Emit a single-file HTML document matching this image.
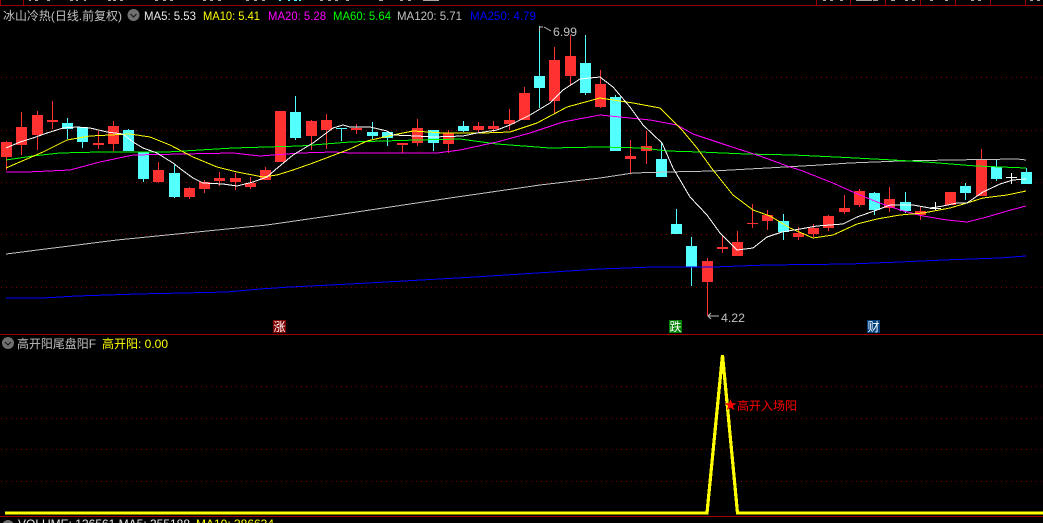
<!DOCTYPE html>
<html><head><meta charset="utf-8"><style>
html,body{margin:0;padding:0;background:#000;width:1043px;height:523px;overflow:hidden}
svg{display:block;position:absolute;left:0;top:0}
text{font-family:"Liberation Sans","WenQuanYi Zen Hei","Noto Sans CJK SC",sans-serif;font-size:12px}
</style></head><body>
<svg width="1043" height="523" viewBox="0 0 1043 523" xmlns="http://www.w3.org/2000/svg">
<rect width="1043" height="523" fill="#000"/>
<!-- top strip -->
<g fill="#a8a8a8" shape-rendering="crispEdges">
<path d="M29 0h2v1h-2zM35 0h3v1h-3zM47 0h3v1h-3zM70 0h3v1h-3zM76 0h2v1h-2zM84 0h2v1h-2zM108 0h3v1h-3zM113 0h3v1h-3zM120 0h3v1h-3zM155 0h3v1h-3zM163 0h3v1h-3zM170 0h3v1h-3zM203 0h3v1h-3zM210 0h3v1h-3zM218 0h3v1h-3zM246 0h3v1h-3zM254 0h3v1h-3zM262 0h3v1h-3zM320 0h3v1h-3zM328 0h3v1h-3zM335 0h3v1h-3zM346 0h3v1h-3zM379 0h4v1h-4zM400 0h3v1h-3zM408 0h3v1h-3zM423 0h16v1h-16zM823 0h3v1h-3zM830 0h3v1h-3zM840 0h3v1h-3zM856 0h16v1h-16zM873 0h5v1h-5zM891 0h4v1h-4zM905 0h3v1h-3zM912 0h3v1h-3zM930 0h3v1h-3zM945 0h3v1h-3zM971 0h3v1h-3zM978 0h3v1h-3zM1030 0h3v1h-3zM1037 0h3v1h-3z"/>
</g>
<path fill="#55ffff" shape-rendering="crispEdges" d="M279 0h2v1h-2zM288 0h2v1h-2zM294 0h3v1h-3zM299 0h2v1h-2z"/>
<g fill="#a00000" shape-rendering="crispEdges">
<rect x="0" y="5" width="1043" height="1"/>
<rect x="0" y="0" width="1" height="5"/><rect x="23" y="0" width="1" height="5"/>
<rect x="816" y="0" width="1" height="5"/><rect x="850" y="0" width="1" height="5"/><rect x="885" y="0" width="1" height="5"/><rect x="920" y="0" width="1" height="5"/><rect x="955" y="0" width="1" height="5"/><rect x="990" y="0" width="1" height="5"/><rect x="1025" y="0" width="1" height="5"/>
<rect x="0" y="334" width="1043" height="1"/>
<rect x="0" y="516" width="1043" height="1"/>
</g>
<!-- grids -->
<g stroke="#800000" stroke-width="1" stroke-dasharray="1 4" shape-rendering="crispEdges">
<path d="M1 77.5H1043M1 130.5H1043M1 182.5H1043M1 234.5H1043M1 287.5H1043M1 386.5H1043M1 418.5H1043M1 449.5H1043M1 481.5H1043"/>
</g>
<!-- candles -->
<path fill="#ff3232" shape-rendering="crispEdges" d="M1 142h11v15h-11zM6 141h1v29h-1zM16 127h11v18h-11zM21 112h1v43h-1zM32 115h11v20h-11zM37 111h1v39h-1zM47 120h11v2h-11zM52 101h1v28h-1zM93 143h11v2h-11zM98 131h1v18h-1zM108 126h11v18h-11zM113 121h1v30h-1zM153 170h11v12h-11zM158 162h1v21h-1zM184 188h11v9h-11zM189 187h1v12h-1zM199 182h11v7h-11zM204 180h1v13h-1zM214 178h11v3h-11zM219 172h1v14h-1zM230 178h11v4h-11zM235 173h1v17h-1zM245 183h11v4h-11zM250 177h1v12h-1zM260 170h11v10h-11zM265 167h1v13h-1zM275 111h11v51h-11zM306 121h11v15h-11zM311 120h1v30h-1zM321 120h11v10h-11zM326 114h1v35h-1zM351 128h11v2h-11zM356 124h1v10h-1zM397 143h11v2h-11zM402 143h1v10h-1zM412 128h11v15h-11zM417 119h1v27h-1zM443 133h11v11h-11zM448 130h1v23h-1zM473 126h11v4h-11zM478 122h1v10h-1zM488 126h11v3h-11zM493 121h1v11h-1zM504 120h11v4h-11zM509 109h1v21h-1zM519 93h11v27h-11zM524 87h1v33h-1zM549 60h11v41h-11zM554 47h1v67h-1zM565 56h11v20h-11zM570 35h1v51h-1zM595 84h11v23h-11zM600 70h1v38h-1zM625 156h11v3h-11zM630 140h1v33h-1zM641 146h11v5h-11zM646 131h1v33h-1zM702 261h11v21h-11zM707 258h1v58h-1zM717 247h11v2h-11zM722 236h1v17h-1zM732 242h11v14h-11zM737 231h1v25h-1zM747 223h11v1h-11zM752 204h1v24h-1zM762 215h11v6h-11zM767 210h1v20h-1zM793 233h11v4h-11zM798 227h1v13h-1zM808 228h11v6h-11zM813 224h1v13h-1zM823 216h11v12h-11zM828 215h1v16h-1zM839 208h11v4h-11zM844 195h1v19h-1zM854 191h11v14h-11zM859 189h1v18h-1zM884 199h11v9h-11zM889 187h1v25h-1zM915 211h11v4h-11zM920 206h1v14h-1zM945 192h11v13h-11zM976 160h11v36h-11zM981 149h1v47h-1z"/>
<path fill="#54ffff" shape-rendering="crispEdges" d="M62 123h11v6h-11zM67 118h1v21h-1zM77 127h11v15h-11zM82 127h1v21h-1zM123 130h11v21h-11zM128 129h1v22h-1zM138 152h11v27h-11zM143 152h1v30h-1zM169 173h11v24h-11zM174 165h1v33h-1zM290 112h11v26h-11zM295 96h1v44h-1zM336 128h11v1h-11zM341 128h1v13h-1zM367 132h11v4h-11zM372 122h1v17h-1zM382 132h11v6h-11zM387 132h1v14h-1zM428 130h11v13h-11zM433 130h1v21h-1zM458 126h11v5h-11zM463 121h1v11h-1zM534 76h11v12h-11zM539 26h1v82h-1zM580 63h11v30h-11zM585 35h1v60h-1zM610 97h11v54h-11zM615 95h1v56h-1zM656 159h11v18h-11zM661 143h1v34h-1zM671 224h11v10h-11zM676 209h1v25h-1zM686 246h11v21h-11zM691 237h1v49h-1zM778 221h11v11h-11zM783 214h1v26h-1zM869 193h11v17h-11zM874 192h1v23h-1zM900 202h11v9h-11zM905 192h1v21h-1zM960 186h11v7h-11zM965 183h1v17h-1zM991 167h11v12h-11zM996 160h1v21h-1zM1021 172h11v12h-11zM1026 168h1v16h-1z"/>
<path fill="#fff" shape-rendering="crispEdges" d="M930 208h11v1h-11zM935 202h1v8h-1zM1006 177h11v1h-11zM1011 173h1v11h-1z"/>
<!-- MA lines -->
<g fill="none" stroke-width="1" shape-rendering="crispEdges">
<polyline stroke="#0000ff" points="6,298 43,298 77,296 107,295 137,294 183,293 227,292 260,289 290,287 350,284 475,277 600,269 653,267 713,267 767,265 850,264 900,262 943,260 1000,258 1026,256"/>
<polyline stroke="#c0c0c0" points="6,254 117,240 167,235 267,225 350,213 450,198 540,185 600,178 633,173 667,172 713,171 767,168 820,165 850,163 900,161 950,160 1017,159 1026,160"/>
<polyline stroke="#00ff00" points="6,160 33,156 60,153 100,152 167,152 233,148 300,146 350,142 417,140 460,139 497,144 550,148 600,147 643,148 667,151 700,152 746,154 793,155 836,157 893,160 926,162 976,166 1026,168"/>
<polyline stroke="#ff00ff" points="6,172 27,172 70,170 100,162 133,155 183,154 233,153 260,156 300,153 333,152 350,153 437,153 460,150 497,142 530,133 563,122 600,115 650,120 677,125 693,134 726,145 760,156 790,167 800,170 833,183 853,192 877,202 900,210 923,216 947,220 967,222 987,217 1007,211 1026,206"/>
<polyline stroke="#ffff00" points="6,168 43,152 67,140 90,136 130,134 150,137 170,145 193,157 217,167 237,172 263,177 277,175 293,170 313,163 350,149 367,141 393,135 413,131 443,133 483,133 510,132 537,123 567,107 600,98 633,103 660,108 677,125 682,130 697,148 713,170 733,195 753,210 770,216 790,228 813,238 833,235 857,224 877,219 900,215 923,213 950,208 967,203 983,198 1007,195 1026,191"/>
<polyline stroke="#ffffff" points="6,148 20,142 33,138 47,133 63,128 77,127 90,128 107,132 123,134 133,142 143,148 157,153 173,163 182,170 193,178 203,183 223,184 237,186 253,182 267,177 275,170 293,155 313,143 333,128 343,125 350,127 370,127 387,131 393,135 417,136 433,137 463,136 477,133 497,130 510,125 530,115 550,103 563,90 580,79 600,77 613,87 630,107 643,125 662,143 673,168 690,197 707,215 720,233 737,250 753,248 767,237 782,232 800,229 817,226 843,224 857,217 877,210 890,205 913,205 930,208 943,206 957,203 967,203 983,192 1000,184 1013,180 1026,179"/>
</g>
<!-- high / low annotation -->
<g fill="none" stroke="#c0c0c0" stroke-width="1">
<path d="M539.5 27H543M539.5 27V31M544 27L551 31"/>
<path d="M708 316H719M708 316L711 313M708 316L711 319"/>
</g>
<text x="553" y="36" fill="#c0c0c0" textLength="24" lengthAdjust="spacingAndGlyphs">6.99</text>
<text x="721" y="322" fill="#c0c0c0" textLength="24" lengthAdjust="spacingAndGlyphs">4.22</text>
<!-- title -->
<text x="3" y="20" fill="#c0c0c0" textLength="119" lengthAdjust="spacingAndGlyphs">冰山冷热(日线.前复权)</text>
<circle cx="133.5" cy="15" r="6" fill="#707070"/>
<path d="M130.5 14l3 3 3-3" fill="none" stroke="#1a1a1a" stroke-width="1.2"/>
<text x="144" y="20" fill="#e8e8e8" textLength="52" lengthAdjust="spacingAndGlyphs">MA5: 5.53</text>
<text x="203" y="20" fill="#ffff00" textLength="57" lengthAdjust="spacingAndGlyphs">MA10: 5.41</text>
<text x="268" y="20" fill="#ff00ff" textLength="58" lengthAdjust="spacingAndGlyphs">MA20: 5.28</text>
<text x="333" y="20" fill="#00ff00" textLength="58" lengthAdjust="spacingAndGlyphs">MA60: 5.64</text>
<text x="397" y="20" fill="#c0c0c0" textLength="65" lengthAdjust="spacingAndGlyphs">MA120: 5.71</text>
<text x="470" y="20" fill="#0000ff" textLength="66" lengthAdjust="spacingAndGlyphs">MA250: 4.79</text>
<!-- badges -->
<rect x="273" y="320" width="13" height="13" fill="#800000" shape-rendering="crispEdges"/>
<text x="273.5" y="331" fill="#fff">涨</text>
<rect x="669" y="320" width="13" height="13" fill="#008000" shape-rendering="crispEdges"/>
<text x="669.5" y="331" fill="#fff">跌</text>
<rect x="867" y="320" width="13" height="13" fill="#004080" shape-rendering="crispEdges"/>
<text x="867.5" y="331" fill="#fff">财</text>
<!-- indicator title -->
<circle cx="8" cy="343" r="6" fill="#707070"/>
<path d="M5 342l3 3 3-3" fill="none" stroke="#1a1a1a" stroke-width="1.2"/>
<text x="17" y="348" fill="#c0c0c0" textLength="79" lengthAdjust="spacingAndGlyphs">高开阳尾盘阳F</text>
<text x="102" y="348" fill="#ffff00" textLength="66" lengthAdjust="spacingAndGlyphs">高开阳: 0.00</text>
<!-- indicator line -->
<polyline fill="none" stroke="#ffff00" stroke-width="3.2" points="5,513 707,513 722.5,355 737.5,513 1043,513" shape-rendering="crispEdges"/>
<polygon fill="#ff0000" points="730.5,399 732,403.2 736.5,403.2 732.9,405.9 734.2,410.2 730.5,407.6 726.8,410.2 728.1,405.9 724.5,403.2 729,403.2"/>
<text x="737" y="410" fill="#ff0000" textLength="60" lengthAdjust="spacingAndGlyphs">高开入场阳</text>
<!-- bottom -->
<circle cx="8" cy="526" r="6" fill="#707070"/>
<text x="18" y="528" fill="#e8e8e8" textLength="172" lengthAdjust="spacingAndGlyphs">VOLUME: 136561  MA5: 355188</text>
<text x="196" y="528" fill="#ffff00" textLength="78" lengthAdjust="spacingAndGlyphs">MA10: 386634</text>
</svg>
</body></html>
